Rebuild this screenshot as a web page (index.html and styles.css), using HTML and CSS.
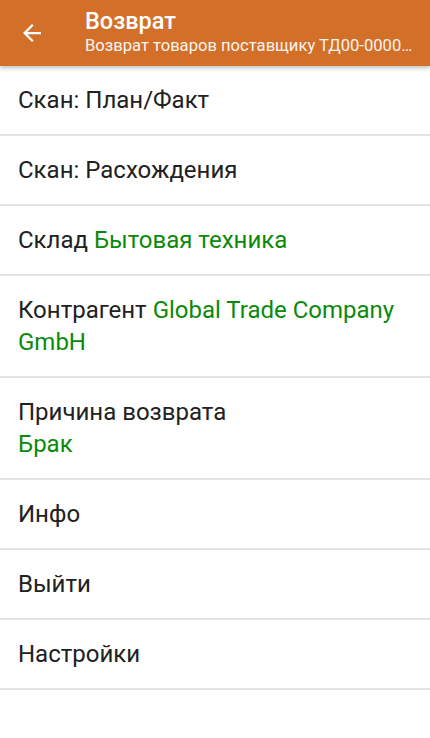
FILE: index.html
```html
<!DOCTYPE html>
<html lang="ru">
    <head>
        <meta charset="utf-8">
        <title>Возврат</title>
        <link rel="stylesheet" href="styles.css">
    </head>
    <body>
        <div class="toolbar">
            <div class="back">
                <svg width="18" height="18" viewBox="0 0 16 16">
                    <path d="M16 7H3.8l5.6-5.6L8 0 0 8l8 8 1.4-1.4L3.8 9H16z" fill="#fff"/>
                </svg>
            </div>
            <div class="titles">
                <div class="title">Возврат</div>
                <div class="subtitle">Возврат товаров поставщику ТД00-000012 от 01.02.2019</div>
            </div>
        </div>
        <div class="menu">
            <div class="item">Скан: План/Факт</div>
            <div class="item">Скан: Расхождения</div>
            <div class="item">Склад <span class="value">Бытовая техника</span></div>
            <div class="item">Контрагент <span class="value">Global Trade Company GmbH</span></div>
            <div class="item">Причина возврата<br><span class="value">Брак</span></div>
            <div class="item">Инфо</div>
            <div class="item">Выйти</div>
            <div class="item">Настройки</div>
        </div>
    </body>
</html>
```

FILE: styles.css
```css
body{margin: 0; background-color: #fff; font-family: Roboto, "Noto Sans", sans-serif; color: #212121;}
.toolbar{height: 66px; background-color: #d2702a; display: flex; align-items: center; box-shadow: 0 2px 4px rgba(0,0,0,0.25); position: relative;}
.back{width: 85px; display: flex; justify-content: center; padding-right: 22px; box-sizing: border-box;}
.titles{flex: 1; min-width: 0; padding-right: 12px; color: #fff;}
.title{font-size: 23.5px; font-weight: 500; line-height: 28px; margin-top: -2px;}
.subtitle{font-size: 16.6px; line-height: 22px; white-space: nowrap; overflow: hidden; text-overflow: ellipsis; opacity: 0.92;}
.item{padding: 18px 18px; font-size: 24px; line-height: 32px; border-bottom: 2px solid #e4e4e4;}
.value{color: #0a8a0a;}
```
